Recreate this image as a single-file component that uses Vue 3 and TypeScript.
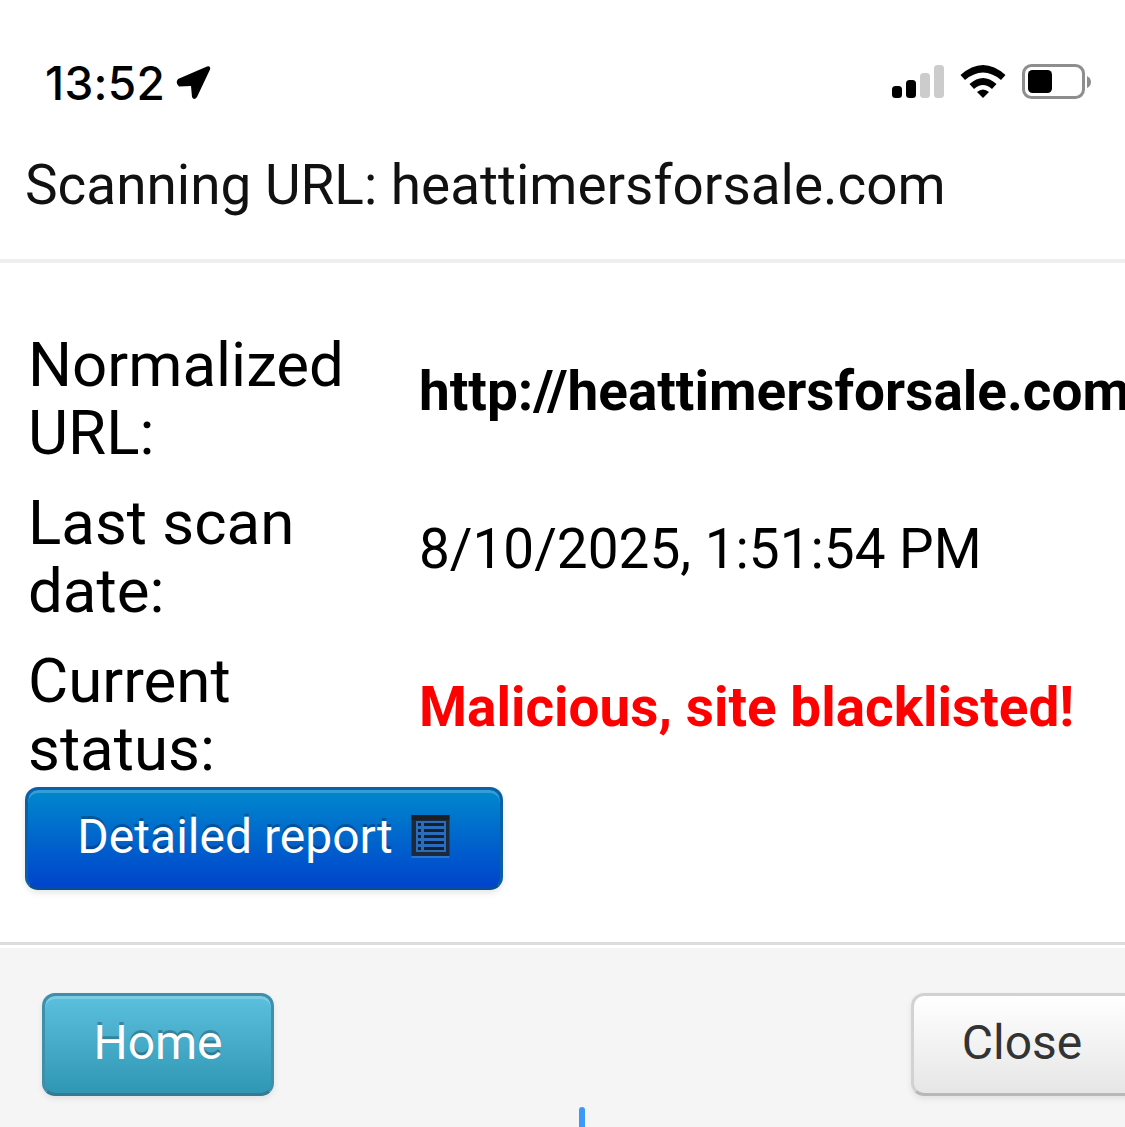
<script setup lang="ts">
const rows = [
  { label: 'Normalized URL:', value: 'http://heattimersforsale.com', kind: 'url' },
  { label: 'Last scan date:', value: '8/10/2025, 1:51:54 PM', kind: 'plain' },
  { label: 'Current status:', value: 'Malicious, site blacklisted!', kind: 'bad' },
]
</script>

<template>
  <div class="page">
    <div class="status">
      <div class="time-wrap">
        <span class="time">13:52</span>
        <svg class="loc" width="36" height="36" viewBox="0 0 36 36">
          <path d="M2 14 L31 1.5 Q35 0.5 34 4.5 L21 32 Q18 36 16 32 L15 21 L3 21.5 Q-1 18 2 14 Z" fill="#000" />
        </svg>
      </div>
      <div class="sys">
        <svg width="52" height="34" viewBox="0 0 52 34" class="signal">
          <rect x="0" y="21" width="10" height="12" rx="3.5" fill="#000" />
          <rect x="14" y="15" width="10" height="18" rx="3.5" fill="#000" />
          <rect x="28" y="8" width="10" height="25" rx="3.5" fill="#ccc" />
          <rect x="42" y="0" width="10" height="33" rx="3.5" fill="#ccc" />
        </svg>
        <svg width="46" height="34" viewBox="0 0 46 34" class="wifi">
          <path d="M0.5 11 Q23 -9 45.5 11 L41 16 Q23 1 5 16 Z" fill="#000" />
          <path d="M9.5 20 Q23 8 36.5 20 L32 25 Q23 17 14 25 Z" fill="#000" />
          <path d="M17 28 Q23 23 29 28 L23 34 Z" fill="#000" />
        </svg>
        <svg width="70" height="36" viewBox="0 0 70 36" class="batt">
          <rect x="1.5" y="1.5" width="60" height="32" rx="8" fill="none" stroke="#8e8e8e" stroke-width="3" />
          <rect x="6" y="6" width="24" height="23" rx="4.5" fill="#000" />
          <path d="M65 12 Q69 14 69 18 Q69 22 65 24 Z" fill="#8e8e8e" />
        </svg>
      </div>
    </div>

    <header class="head">Scanning URL: heattimersforsale.com</header>

    <main class="body">
      <div class="table">
        <template v-for="r in rows" :key="r.label">
          <div class="label">{{ r.label }}</div>
          <div class="value" :class="r.kind">{{ r.value }}</div>
        </template>
      </div>
      <button class="btn primary" type="button">
        <span>Detailed report</span>
        <svg class="list" width="40" height="46" viewBox="0 0 40 46">
          <rect x="0.5" y="1" width="38" height="41" fill="#1c2a3c" />
          <rect x="0.5" y="1" width="38" height="5" fill="#1c1f24" />
          <rect x="5" y="7" width="30" height="31" fill="#2a6dbd" />
          <g fill="#16202c">
            <rect x="7" y="9" width="3" height="3" />
            <rect x="7" y="15" width="3" height="3" />
            <rect x="7" y="21" width="3" height="3" />
            <rect x="7" y="27" width="3" height="3" />
            <rect x="7" y="33" width="3" height="3" />
            <rect x="13" y="9" width="20" height="3" />
            <rect x="13" y="15" width="20" height="3" />
            <rect x="13" y="21" width="20" height="3" />
            <rect x="13" y="27" width="20" height="3" />
            <rect x="13" y="33" width="20" height="3" />
          </g>
          <rect x="0.5" y="42" width="38" height="2" fill="#2f74c8" />
        </svg>
      </button>
    </main>

    <footer class="foot">
      <button class="btn info" type="button">Home</button>
      <button class="btn plain-btn" type="button">Close</button>
      <i class="caret"></i>
    </footer>
  </div>
</template>

<style>
html, body { margin: 0; background: #fff; }
</style>

<style scoped>
.page {
  width: 1125px;
  height: 1127px;
  overflow: hidden;
  position: relative;
  display: flex;
  flex-direction: column;
  font-family: Roboto, "Liberation Sans", sans-serif;
  color: #000;
  background: #fff;
}
.status {
  height: 126px;
  flex: none;
  box-sizing: border-box;
  padding: 58px 33px 0 45px;
  display: flex;
  justify-content: space-between;
  align-items: flex-start;
}
.time-wrap { display: flex; align-items: center; gap: 11px; }
.time {
  font-family: Inter, Roboto, sans-serif;
  font-size: 46px;
  line-height: 50px;
  font-weight: 500;
  letter-spacing: 0.3px;
}
.sys { display: flex; align-items: flex-start; padding-top: 6px; }
.signal { margin-right: 16px; margin-top: 1px; }
.wifi { margin-right: 16px; }
.head {
  flex: none;
  height: 137px;
  box-sizing: border-box;
  padding: 24px 25px 0;
  font-size: 54.9px;
  line-height: 70px;
  color: #111;
  border-bottom: 4px solid #eeeeee;
  white-space: nowrap;
}
.body {
  flex: none;
  height: 682px;
  box-sizing: border-box;
  padding: 68px 0 0 25px;
  border-bottom: 3px solid #dddddd;
}
.table {
  display: grid;
  grid-template-columns: 391px max-content;
  row-gap: 22px;
  padding-left: 3px;
  margin-bottom: 4px;
}
.label {
  font-size: 61.8px;
  line-height: 68px;
  width: 345px;
}
.value {
  align-self: center;
  font-size: 54.9px;
  line-height: 68px;
  white-space: nowrap;
  padding-bottom: 17px;
}
.url { font-weight: 700; }
.bad { font-weight: 700; color: #ff0000; }
.btn {
  font-family: inherit;
  box-sizing: border-box;
  height: 103px;
  border-radius: 13px;
  font-size: 48px;
  padding: 0 0 5px;
  display: inline-flex;
  align-items: center;
  justify-content: center;
}
.primary {
  width: 478px;
  gap: 18px;
  color: #fff;
  border: 3px solid #0a5fa8;
  border-bottom-color: #064f94;
  background: linear-gradient(#0088cc, #0044cc);
  box-shadow: inset 0 3px 0 rgba(255,255,255,.2), 0 3px 6px rgba(0,0,0,.1);
  text-shadow: 0 -3px 0 rgba(0,0,0,.25);
}
.list { margin-top: 2px; }
.foot {
  flex: 1;
  background: #f5f5f5;
  box-sizing: border-box;
  border-top: 3px solid #fff;
  padding: 45px 0 0 42px;
  display: flex;
  justify-content: space-between;
  align-items: flex-start;
}
.info {
  width: 232px;
  color: #fff;
  border: 3px solid #3e8fac;
  border-bottom-color: #357a94;
  background: linear-gradient(#5bc0de, #2f96b4);
  box-shadow: inset 0 3px 0 rgba(255,255,255,.2), 0 3px 6px rgba(0,0,0,.08);
  text-shadow: 0 -3px 0 rgba(0,0,0,.25);
}
.plain-btn {
  width: 228px;
  flex: none;
  margin-right: -14px;
  color: #333;
  padding-right: 6px;
  border: 3px solid #d2d2d2;
  border-bottom-color: #b8b8b8;
  background: linear-gradient(#ffffff, #e6e6e6);
  box-shadow: 0 3px 6px rgba(0,0,0,.08);
}
.caret {
  position: absolute;
  left: 579px;
  top: 1107px;
  width: 6px;
  height: 24px;
  border-radius: 3px 3px 0 0;
  background: #3b99fc;
}
</style>
